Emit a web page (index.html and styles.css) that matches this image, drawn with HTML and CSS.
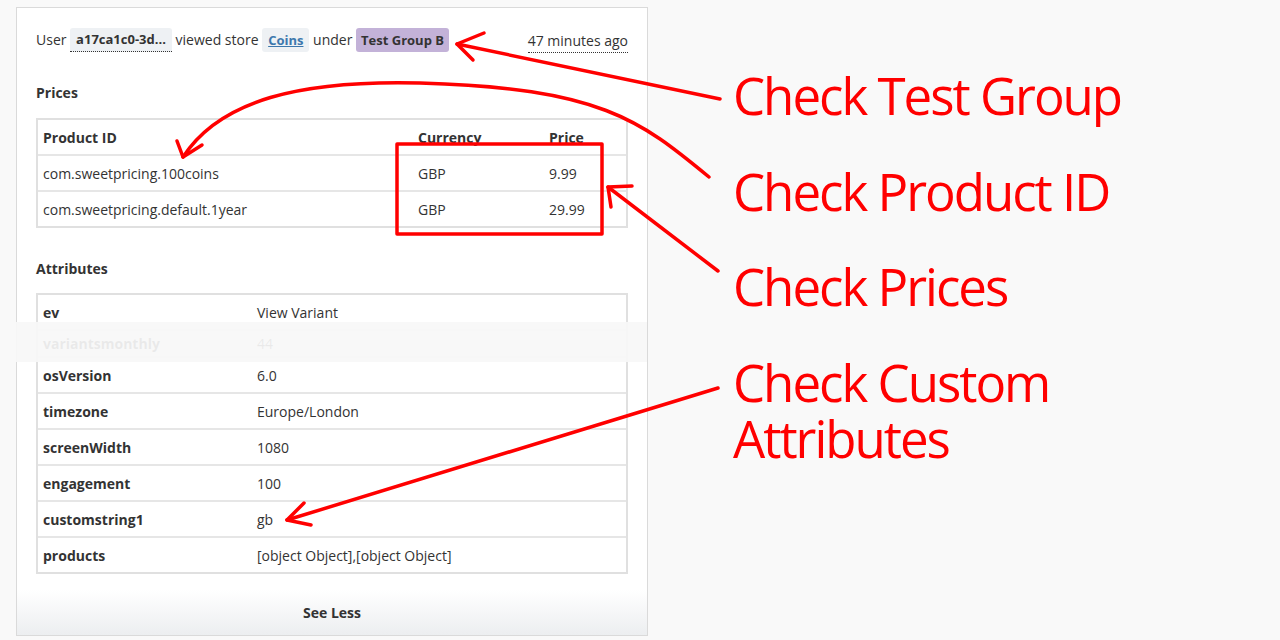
FILE: index.html
```html
<!DOCTYPE html>
<html>
<head>
<meta charset="utf-8">
<link rel="stylesheet" href="styles.css">
</head>
<body>
<div class="page">
  <section class="card">
    <div class="event">
      <div class="sentence">User <span class="chip chip-user">a17ca1c0-3d...</span> viewed store <span class="chip chip-store"><a class="store-link">Coins</a></span> under <span class="chip chip-group">Test Group B</span></div>
      <span class="time">47 minutes ago</span>
    </div>

    <h3 class="section-title">Prices</h3>
    <table class="grid prices">
      <tr class="head"><td class="c-id">Product ID</td><td class="c-cur">Currency</td><td>Price</td></tr>
      <tr><td>com.sweetpricing.100coins</td><td>GBP</td><td>9.99</td></tr>
      <tr><td>com.sweetpricing.default.1year</td><td>GBP</td><td>29.99</td></tr>
    </table>

    <h3 class="section-title">Attributes</h3>
    <table class="grid attrs">
      <tr><th>ev</th><td>View Variant</td></tr>
      <tr class="short"><th>variantsmonthly</th><td>44</td></tr>
      <tr><th>osVersion</th><td>6.0</td></tr>
      <tr><th>timezone</th><td>Europe/London</td></tr>
      <tr><th>screenWidth</th><td>1080</td></tr>
      <tr><th>engagement</th><td>100</td></tr>
      <tr><th>customstring1</th><td>gb</td></tr>
      <tr><th>products</th><td>[object Object],[object Object]</td></tr>
    </table>

    <div class="see-less">See Less</div>
  </section>

  <aside class="notes">
    <p class="note">Check Test Group</p>
    <p class="note">Check Product ID</p>
    <p class="note">Check Prices</p>
    <div class="note-pair">
      <p class="note">Check Custom</p>
      <p class="note">Attributes</p>
    </div>
  </aside>
</div>

<div class="fade-band"></div>

<svg class="arrows" width="1280" height="640" viewBox="0 0 1280 640">
  <g fill="none" stroke="#ff0000" stroke-width="3.5" stroke-linecap="round" stroke-linejoin="round">
    <path d="M720 99 L457 44"/>
    <path d="M484 33 L457 44 L473 60"/>
    <path d="M709 177 C640 120 600 88 420 83 C300 80 220 100 183 157"/>
    <path d="M177 141 L183 157 L202 145"/>
    <rect x="397" y="144" width="205" height="90"/>
    <path d="M718 271 L608 187"/>
    <path d="M632 186 L608 187 L611 207"/>
    <path d="M718 388 L287 520"/>
    <path d="M304 503 L287 520 L311 525"/>
  </g>
</svg>
</body>
</html>
```

FILE: styles.css
```css
html, body {
  margin: 0;
  padding: 0;
}

body {
  background: #f9f9f9;
  font-family: "Open Sans", "Noto Sans", sans-serif;
  font-size: 14px;
  color: #333333;
  width: 1280px;
  height: 640px;
  overflow: hidden;
  position: relative;
}

.page {
  display: flex;
  align-items: flex-start;
}

.card {
  margin: 7px 0 0 16px;
  width: 630px;
  background: #ffffff;
  border: 1px solid #dadada;
  display: flex;
  flex-direction: column;
}

.event {
  display: flex;
  justify-content: space-between;
  align-items: center;
  padding: 20px 19px 0 19px;
  height: 24px;
}

.sentence {
  display: flex;
  align-items: center;
  white-space: pre;
  line-height: 24px;
}

.chip {
  display: inline-block;
  height: 24px;
  line-height: 24px;
  padding: 0 6px;
  border-radius: 3px;
  font-size: 13px;
  font-weight: 700;
  box-sizing: border-box;
}

.chip-user {
  background: #eef1f4;
  border-bottom: 1px dotted #333;
  line-height: 23px;
  border-radius: 3px 3px 0 0;
}

.chip-store {
  background: #eef1f4;
  padding: 0 6px;
}

.store-link {
  color: #3d78ad;
  text-decoration: underline;
}

.chip-group {
  background: #c3b2d8;
  color: #333;
  padding: 0 5px;
}

.time {
  line-height: 22px;
  border-bottom: 1px dotted #333;
  margin-top: 2px;
}

.section-title {
  margin: 31px 19px 0 19px;
  font-size: 14px;
  font-weight: 700;
  line-height: 20px;
}

.grid {
  margin: 14px 19px 0 19px;
  width: 592px;
  border-collapse: separate;
  border-spacing: 0;
  border: 2px solid #e0e0e0;
}

.prices {
  margin-top: 15px;
}

.grid td, .grid th {
  height: 34px;
  padding: 0 0 0 5px;
  text-align: left;
  vertical-align: middle;
  border-top: 2px solid #e6e6e6;
  font-size: 14px;
}

.grid tr:first-child td, .grid tr:first-child th {
  border-top: none;
}

.prices .head td {
  font-weight: 700;
}

.prices .c-id {
  width: 370px;
}

.prices .c-cur {
  width: 126px;
}

.attrs th {
  width: 209px;
  font-weight: 700;
}

.attrs tr.short td, .attrs tr.short th {
  height: 25px;
}

.see-less {
  margin-top: 16px;
  height: 45px;
  line-height: 45px;
  text-align: center;
  font-weight: 700;
  background: linear-gradient(#ffffff, #eceef0);
}

.notes {
  margin-left: 85px;
  padding-top: 67px;
  display: flex;
  flex-direction: column;
  gap: 39.5px;
}

.note-pair {
  display: flex;
  flex-direction: column;
}

.note {
  margin: 0;
  height: 56px;
  color: #ff0000;
  font-family: "Open Sans", "Noto Sans", sans-serif;
  font-size: 51px;
  line-height: 56px;
  letter-spacing: -2px;
  white-space: nowrap;
}

.fade-band {
  position: absolute;
  left: 16px;
  top: 322px;
  width: 631px;
  height: 40px;
  background: rgba(247, 247, 247, 0.93);
}

.arrows {
  position: absolute;
  left: 0;
  top: 0;
  pointer-events: none;
}
```
